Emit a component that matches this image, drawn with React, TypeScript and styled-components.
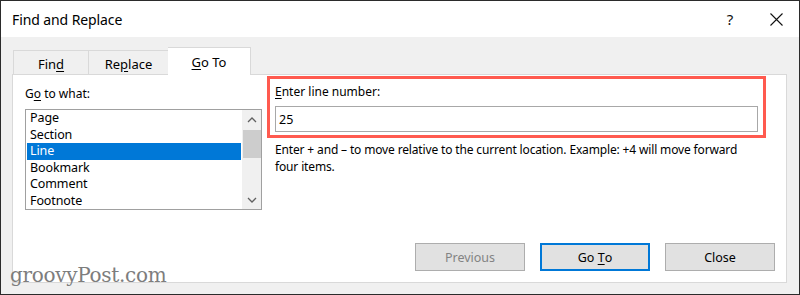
import React from "react";
import styled, { createGlobalStyle } from "styled-components";

const Global = createGlobalStyle`
  html, body { margin: 0; padding: 0; background: #ffffff; }
  body { font-family: "Noto Sans", "Open Sans", sans-serif; }
`;

const Window = styled.div`
  position: relative;
  width: 800px;
  height: 295px;
  box-sizing: border-box;
  border: 1px solid #2b2b2b;
  display: flex;
  flex-direction: column;
  overflow: hidden;
`;

const TitleBar = styled.div`
  height: 36px;
  background: #ffffff;
  display: flex;
  align-items: center;
  padding: 0 0 0 11px;
`;

const Title = styled.div`
  font-size: 14px;
  letter-spacing: -0.1px;
  color: #000;
  flex: 1;
`;

const TitleButton = styled.div`
  width: 46px;
  height: 36px;
  display: flex;
  align-items: center;
  justify-content: center;
  font-size: 15px;
  color: #111;
`;

const Body = styled.div`
  flex: 1;
  background: #f0f0f0;
  display: flex;
  flex-direction: column;
  padding: 10px 12px 11px 11px;
`;

const TabStrip = styled.div`
  display: flex;
  align-items: flex-end;
  height: 28px;
  padding-left: 1px;
  position: relative;
  z-index: 1;
`;

const Tab = styled.div<{ $active?: boolean; $w: number }>`
  width: ${(p) => p.$w}px;
  height: ${(p) => (p.$active ? 28 : 25)}px;
  box-sizing: border-box;
  border: 1px solid #d9d9d9;
  border-bottom: ${(p) => (p.$active ? "none" : "1px solid #d9d9d9")};
  margin-left: ${(p) => (p.$active ? -1 : 0)}px;
  background: ${(p) => (p.$active ? "#ffffff" : "#f0f0f0")};
  display: flex;
  align-items: center;
  justify-content: center;
  font-size: 13px;
  color: #000;
  padding-top: ${(p) => (p.$active ? 0 : 2)}px;
  & + & { border-left: none; }
`;

const Panel = styled.div`
  flex: 1;
  background: #ffffff;
  border: 1px solid #d9d9d9;
  margin-top: -1px;
  display: flex;
  padding: 0 11px 11px 12px;
`;

const LeftCol = styled.div`
  width: 237px;
  display: flex;
  flex-direction: column;
  padding-top: 11px;
`;

const RightCol = styled.div`
  flex: 1;
  display: flex;
  flex-direction: column;
  margin-left: 5px;
  padding-top: 1px;
`;

const Label = styled.div`
  font-size: 12px;
  line-height: 16px;
  color: #000;
`;

const U = styled.span`
  text-decoration: underline;
  text-underline-offset: 2px;
`;

const ListBox = styled.div`
  margin-top: 7px;
  height: 101px;
  box-sizing: border-box;
  border: 1px solid #a0a0a0;
  display: flex;
`;

const Items = styled.div`
  flex: 1;
  padding: 0 1px;
  display: flex;
  flex-direction: column;
`;

const Item = styled.div<{ $sel?: boolean }>`
  height: 16.6px;
  line-height: 16.6px;
  font-size: 12.5px;
  letter-spacing: -0.1px;
  padding-left: 3px;
  background: ${(p) => (p.$sel ? "#0078d7" : "transparent")};
  color: ${(p) => (p.$sel ? "#ffffff" : "#000")};
`;

const ScrollBar = styled.div`
  width: 19px;
  background: #f0f0f0;
  display: flex;
  flex-direction: column;
  align-items: center;
`;

const Arrow = styled.div`
  height: 19px;
  width: 100%;
  display: flex;
  align-items: center;
  justify-content: center;
`;

const Thumb = styled.div`
  width: 18px;
  height: 28px;
  background: #cdcdcd;
  margin-top: 1px;
`;

const Spacer = styled.div`
  flex: 1;
`;

const Highlight = styled.div`
  width: 499px;
  height: 62px;
  box-sizing: border-box;
  border: 3px solid #ff5a4f;
  padding: 5px 5px 0 5px;
  display: flex;
  flex-direction: column;
`;

const Input = styled.div`
  margin-top: 6px;
  height: 26px;
  box-sizing: border-box;
  border: 1px solid #a8a8a8;
  display: flex;
  align-items: center;
  padding-left: 3px;
  font-size: 12.5px;
  color: #000;
`;

const Help = styled.div`
  margin: 3px 0 0 8px;
  font-size: 12px;
  letter-spacing: -0.15px;
  line-height: 17px;
  color: #000;
  width: 480px;
`;

const Buttons = styled.div`
  margin-top: auto;
  display: flex;
  justify-content: flex-end;
  gap: 15px;
`;

const Button = styled.div<{ $primary?: boolean; $disabled?: boolean }>`
  width: 110px;
  height: 28px;
  box-sizing: border-box;
  border: ${(p) => (p.$primary ? "2px solid #0078d7" : "1px solid #adadad")};
  background: #e1e1e1;
  display: flex;
  align-items: center;
  justify-content: center;
  font-size: 12.5px;
  color: ${(p) => (p.$disabled ? "#838383" : "#000")};
`;

const Watermark = styled.div`
  position: absolute;
  left: 9px;
  top: 264px;
  font-family: "DejaVu Serif", "Liberation Serif", serif;
  font-size: 20px;
  line-height: 20px;
  color: #7d7d7d;
  letter-spacing: -0.3px;
`;

const items = ["Page", "Section", "Line", "Bookmark", "Comment", "Footnote"];

function Chevron({ up }: { up?: boolean }) {
  return (
    <svg width="10" height="6" viewBox="0 0 10 6">
      <path
        d={up ? "M1 5 L5 1 L9 5" : "M1 1 L5 5 L9 1"}
        fill="none"
        stroke="#606060"
        strokeWidth="1.3"
      />
    </svg>
  );
}

export default function App() {
  return (
    <>
      <Global />
      <Window>
        <TitleBar>
          <Title>Find and Replace</Title>
          <TitleButton>?</TitleButton>
          <TitleButton>
            <svg width="13" height="13" viewBox="0 0 13 13">
              <path d="M0.5 0.5 L12.5 12.5 M12.5 0.5 L0.5 12.5" stroke="#111" strokeWidth="1.1" />
            </svg>
          </TitleButton>
        </TitleBar>
        <Body>
          <TabStrip>
            <Tab $w={76}>
              Fin<U>d</U>
            </Tab>
            <Tab $w={80}>
              Re<U>p</U>lace
            </Tab>
            <Tab $w={83} $active>
              <U>G</U>o To
            </Tab>
          </TabStrip>
          <Panel>
            <LeftCol>
              <Label>
                G<U>o</U> to what:
              </Label>
              <ListBox>
                <Items>
                  {items.map((it) => (
                    <Item key={it} $sel={it === "Line"}>
                      {it}
                    </Item>
                  ))}
                </Items>
                <ScrollBar>
                  <Arrow>
                    <Chevron up />
                  </Arrow>
                  <Thumb />
                  <Spacer />
                  <Arrow>
                    <Chevron />
                  </Arrow>
                </ScrollBar>
              </ListBox>
            </LeftCol>
            <RightCol>
              <Highlight>
                <Label>
                  <U>E</U>nter line number:
                </Label>
                <Input>25</Input>
              </Highlight>
              <Help>
                Enter + and – to move relative to the current location. Example: +4 will move forward four
                items.
              </Help>
              <Buttons>
                <Button $disabled>Previous</Button>
                <Button $primary>
                  Go&nbsp;<U>T</U>o
                </Button>
                <Button>Close</Button>
              </Buttons>
            </RightCol>
          </Panel>
        </Body>
        <Watermark>groovyPost.com</Watermark>
      </Window>
    </>
  );
}
